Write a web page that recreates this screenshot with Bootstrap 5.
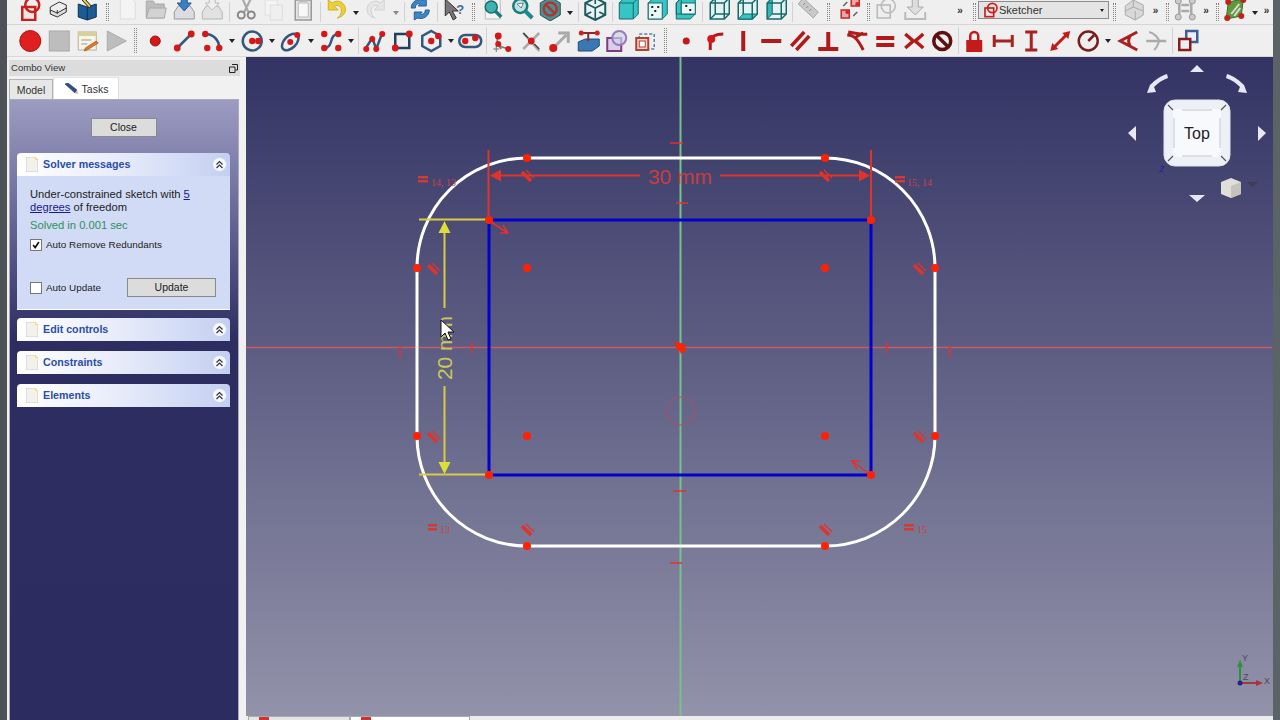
<!DOCTYPE html>
<html lang="en">
<head>
<meta charset="UTF-8">
<title>FreeCAD Sketcher</title>
<link href="https://cdn.jsdelivr.net/npm/bootstrap@5.3.0/dist/css/bootstrap.min.css" rel="stylesheet">
<style>
  html, body { height: 100%; overflow: hidden; }
  body { font-family: "Liberation Sans", Arial, sans-serif; font-size: 11px; color: #222; background: #eee; }
  .edge { width: 7px; background: #4c5256; flex: none; }
  .edge-r { width: 8px; background: #5b6367; }
  .tbar { background: #efefef; overflow: hidden; padding-left: 9px; }
  .tbar-1 { height: 25px; border-bottom: 1px solid #d4d4d4; }
  .tbar-2 { height: 32px; border-bottom: 1px solid #d8d8d8; }
  .ic { width: 28.5px; height: 24px; flex: none; display: block; }
  .tbar-1 .ic { margin-top: -3px; }
  .tbar-2 .ic { margin-top: 4px; }
  .ca { width: 11px; flex: none; display: flex; align-items: center; justify-content: center; }
  .ca::after { content: ""; border: 3px solid transparent; border-top: 4px solid #222; margin-top: 4px; }
  .ca.off::after { border-top-color: #888; }
  .more { width: 20px; flex: none; text-align: center; font-size: 10px; font-weight: 700; line-height: 22px; color: #333; }
  .more.m14 { width: 14px; } .more.m12 { width: 12px; }
  .more.after-gap { margin-left: 21px; }
  .hd { width: 11px; flex: none; position: relative; }
  .hd::after { content: ""; position: absolute; left: 40%; top: 3px; bottom: 3px; width: 3px; border-left: 1px dotted #888; border-right: 1px dotted #888; }
  .hd.n { width: 8px; } .hd.w { width: 13.5px; } .hd.x { width: 12.5px; }
  .sp { width: 5px; flex: none; position: relative; }
  .sp::after { content: ""; position: absolute; left: 50%; top: 2px; bottom: 2px; border-left: 1px solid #d2d2d2; }
  .sp.s { width: 3.5px; }
  .wb { width: 131px; height: 18px; flex: none; margin-top: 1px; padding: 0 4px; background: #e4e4e4; border: 1px solid #8c8c8c; font-size: 11px; color: #333; }
  .wb svg { width: 16px; height: 16px; }
  .wb .arrow { border: 2.5px solid transparent; border-top: 3px solid #222; margin-top: 3px; }

  .combo { width: 239px; background: #f1f1f1; flex: none; }
  .combo-title { height: 16px; margin: 3px 6px 0 2px; padding: 0 2px; background: #dcdcdc; font-size: 9.6px; line-height: 16px; color: #333; }
  .combo .nav-tabs { margin: 1px 0 0 2px; border: 0; height: 22px; font-size: 10.5px; width: 232px; }
  .combo .nav-link { padding: 0; border: 1px solid #b4b4b4; border-bottom: 0; border-radius: 0; color: #333; background: #e7e7e7; height: 20px; margin-top: 2px; line-height: 20px; width: 44px; text-align: center; }
  .combo .nav-link.active { background: #fff; height: 22px; margin-top: 0; width: 66px; color: #333; }
  .taskpanel { margin: 0 7px 0 2px; padding: 18px 8px 0 7px; border: 1px solid #aab; border-bottom: 0;
    background: linear-gradient(180deg, #9c9cc2 0, #6f6f9e 100px, #2d2d61 240px, #2c2c60 100%); }
  .btn-qt { --bs-btn-padding-y: 0; --bs-btn-padding-x: 0; --bs-btn-font-size: 10.5px; --bs-btn-color: #222; --bs-btn-bg: #dcdcdc; --bs-btn-border-color: #8a8a8a;
    --bs-btn-border-radius: 0; --bs-btn-hover-bg: #dcdcdc; --bs-btn-hover-border-color: #8a8a8a; height: 19px; line-height: 17px; }
  .btn-close-task { width: 66px; margin-bottom: 16px; }
  .btn-update { width: 89px; }
  .taskbox { border: 0; border-radius: 4px 4px 0 0; background: none; margin-bottom: 10px; --bs-card-spacer-y: 0; --bs-card-spacer-x: 0; }
  .taskbox .card-header { height: 23px; padding: 0 3px 0 9px; border: 0; border-radius: 4px 4px 0 0; background: linear-gradient(90deg, #fff 0, #e6ebfa 50%, #c3cff1 100%);
    color: #2b4ea6; font-weight: 700; font-size: 10.7px; }
  .taskbox .doc { width: 12px; height: 15px; margin-right: 5px; }
  .taskbox .tog { width: 15px; height: 15px; margin-left: auto; }
  .taskbox .card-body { height: 134px; padding: 12px 13px 0; background: #d1dbf5; line-height: 13px; color: #222; font-size: 11.2px; border-bottom: 1px solid #fff; }
  .taskbox a { color: #1a1a8c; }
  .solved { color: #2f8f5b; margin: 5px 0 6px; font-size: 11.2px; }
  .form-check { min-height: 0; padding: 0; margin: 0; display: flex; align-items: center; font-size: 9.9px; }
  .form-check .form-check-input { float: none; margin: 0 4px 0 0; width: 12px; height: 12px; border-radius: 0; border: 1px solid #777; background-color: #fff; }
  .form-check-input:checked[type=checkbox] { background-color: #fff; border-color: #777;
    --bs-form-check-bg-image: url("data:image/svg+xml,%3csvg xmlns='http://www.w3.org/2000/svg' viewBox='0 0 12 12'%3e%3cpath d='M2.5 6l2.5 3 4.5-6.5' fill='none' stroke='%23111' stroke-width='2'/%3e%3c/svg%3e"); }
  .upd-row { margin-top: 27px; padding-right: 1px; }

  .view-col { min-width: 0; }
  .view { height: 659px; background: linear-gradient(180deg, #333364 0, #9292aa 100%); overflow: hidden; }
  .view svg { display: block; }
  .doc-tabs { height: 4px; overflow: hidden; padding-left: 2px; background: #ececec; }
  .doc-tab { width: 102px; background: #e5e5e5; border: 1px solid #aaa; border-bottom: 0; }
  .doc-tab.on { width: 120px; background: #fff; }
  .doc-tab i { display: block; width: 10px; height: 3px; margin-left: 10px; background: #c33; }
</style>
</head>
<body class="d-flex">
<div class="edge"></div>
<div class="flex-grow-1 d-flex flex-column" id="app">

  <div class="tbar tbar-1 d-flex">
    <svg class="ic" viewBox="0 0 24 24"><rect x="4" y="10" width="13" height="13" fill="#f6e4e4" stroke="#c4211f" stroke-width="2.5"/><circle cx="14" cy="8" r="7" fill="none" stroke="#c4211f" stroke-width="2.5"/></svg>
    <svg class="ic" viewBox="0 0 24 24"><path d="M3 10l9-5 7 3v4l-9 5-7-3z" fill="#eee" stroke="#333"/><path d="M3 13l7 3 9-5v4l-9 5-7-3z" fill="#ddd" stroke="#333"/><path d="M10 13v4" stroke="#333"/></svg>
    <svg class="ic" viewBox="0 0 24 24"><path d="M3 7l9 3 9-3v13l-9 3-9-3z" fill="#1c5c96" stroke="#0f2f50"/><path d="M12 10v13" stroke="#0f2f50"/><path d="M5 1l9 10 2-2L7 -1z" fill="#e3c84a" stroke="#222"/></svg>
    <div class="hd"></div>
    <svg class="ic" viewBox="0 0 24 24"><path d="M5 1h11l4 4v17H5z" fill="#f4f4f4" stroke="#ddd"/></svg>
    <svg class="ic" viewBox="0 0 24 24"><path d="M3 4h7l2 3h9v14H3z" fill="#bdbdbd" stroke="#aaa"/><path d="M3 21l3-10h17l-2 10z" fill="#d2d2d2" stroke="#aaa"/></svg>
    <svg class="ic" viewBox="0 0 24 24"><path d="M2 15l4-6h12l4 6v7H2z" fill="#dcdce2" stroke="#999"/><path d="M9 0h6v6h4l-7 8-7-8h4z" fill="#3a80c0" stroke="#27598a"/></svg>
    <svg class="ic" viewBox="0 0 24 24"><path d="M2 15l4-6h12l4 6v7H2z" fill="#e2e2e2" stroke="#b5b5b5"/><path d="M9 1h6v5h4l-7 7-7-7h4z" fill="#eee" stroke="#bbb"/></svg>
    <div class="sp"></div>
    <svg class="ic" viewBox="0 0 24 24"><path d="M8 1l6 14M17 1l-7 14" stroke="#aaa" stroke-width="2.2" fill="none"/><circle cx="7" cy="18" r="3.5" fill="none" stroke="#888" stroke-width="2"/><circle cx="17" cy="18" r="3.5" fill="none" stroke="#888" stroke-width="2"/></svg>
    <svg class="ic" viewBox="0 0 24 24"><rect x="3" y="3" width="12" height="15" fill="#f4f4f4" stroke="#e0e0e0"/><rect x="8" y="8" width="12" height="15" fill="#efefef" stroke="#ddd"/></svg>
    <svg class="ic" viewBox="0 0 24 24"><rect x="4" y="3" width="16" height="20" fill="#e4e4e4" stroke="#999" stroke-width="1.5"/><rect x="7" y="6" width="10" height="14" fill="#f8f8f8" stroke="#bbb"/><rect x="8" y="1" width="8" height="4" fill="#bbb"/></svg>
    <div class="sp"></div>
    <svg class="ic" viewBox="0 0 24 24"><path d="M4 3v10h10l-4-4c4-2 8 1 7 6-.5 3-2 5-4 6 6-1 9-6 8-10-1-6-8-9-13-5z" fill="#ecd03a" stroke="#d2b11c"/></svg>
    <div class="ca"></div>
    <svg class="ic" viewBox="0 0 24 24"><path d="M20 3v10H10l4-4c-4-2-8 1-7 6 .5 3 2 5 4 6-6-1-9-6-8-10 1-6 8-9 13-5z" fill="#e6e6e6" stroke="#d2d2d2"/></svg>
    <div class="ca off"></div>
    <div class="sp"></div>
    <svg class="ic" viewBox="0 0 24 24"><path d="M3 11c0-6 6-10 12-8l3-2v8h-8l2-2c-3-1-5 1-5 4z" fill="#3a86c8" stroke="#2a5f90"/><path d="M21 13c0 6-6 10-12 8l-3 2v-8h8l-2 2c3 1 5-1 5-4z" fill="#3a86c8" stroke="#2a5f90"/></svg>
    <div class="sp"></div>
    <svg class="ic" viewBox="0 0 24 24"><path d="M3 2v17l4-4 4 8 3-2-4-7h6z" fill="#777" stroke="#333"/><text x="14" y="17" font-family="Liberation Sans" font-weight="700" font-size="13" fill="#3f6c96">?</text></svg>
    <div class="hd"></div>
    <svg class="ic" viewBox="0 0 24 24"><path d="M4 1h15v21H4z" fill="#f4f4f4" stroke="#bbb"/><circle cx="10" cy="10" r="6" fill="#3fb3b3" stroke="#1c6a6a" stroke-width="1.5"/><path d="M14 14l6 6" stroke="#1c7a7a" stroke-width="3.5"/></svg>
    <svg class="ic" viewBox="0 0 24 24"><circle cx="10" cy="9" r="7" fill="#bde3e3" stroke="#1c7a7a" stroke-width="2.5"/><path d="M15 14l7 7" stroke="#1c8a8a" stroke-width="4"/><path d="M7 7l4 4 2-5z" fill="#fff" stroke="#333" stroke-width=".6"/></svg>
    <svg class="ic" viewBox="0 0 24 24"><path d="M12 0l10 6v12l-10 6L2 18V6z" fill="#4d8f8f" stroke="#2b5454"/><circle cx="12" cy="12" r="6.5" fill="none" stroke="#a83838" stroke-width="2.5"/><path d="M7.5 7.5l9 9" stroke="#a83838" stroke-width="2.5"/></svg>
    <div class="ca"></div>
    <div class="sp"></div>
    <svg class="ic" viewBox="0 0 24 24"><path d="M12 1l10 5v12l-10 5L2 18V6z" fill="#e8f3f3" stroke="#1d5a5c" stroke-width="2"/><path d="M2 6l10 5 10-5M12 11v12M12 1v6M2 18l6-3M22 18l-6-3" stroke="#1d5a5c" fill="none" stroke-width="1.6"/></svg>
    <div class="sp"></div>
    <svg class="ic" viewBox="0 0 24 24"><path d="M3 6l5-5h14v16l-5 5H3z" fill="#35c5c5" stroke="#176a6a"/><path d="M3 6h14v16M17 6l5-5" fill="none" stroke="#176a6a"/></svg>
    <svg class="ic" viewBox="0 0 24 24"><path d="M3 6l5-5h14v16l-5 5H3z" fill="#35c5c5" stroke="#176a6a"/><rect x="3" y="6" width="14" height="16" fill="#e8f8f8" stroke="#176a6a"/><g fill="#222"><rect x="6" y="9" width="2" height="2"/><rect x="12" y="9" width="2" height="2"/><rect x="9" y="13" width="2" height="2"/><rect x="6" y="17" width="2" height="2"/></g></svg>
    <svg class="ic" viewBox="0 0 24 24"><path d="M3 6l5-5h14v16l-5 5H3z" fill="#35c5c5" stroke="#176a6a"/><path d="M8 1v16H3V6zM8 17h14" fill="none" stroke="#176a6a"/><rect x="8" y="6" width="14" height="11" fill="#e8f8f8" stroke="#176a6a"/><g fill="#222"><rect x="12" y="8" width="2" height="2"/><rect x="16" y="12" width="2" height="2"/></g></svg>
    <div class="sp"></div>
    <svg class="ic" viewBox="0 0 24 24"><path d="M3 6l5-5h14v16l-5 5H3z" fill="#e4f2f2" stroke="#176a6a" stroke-width="1.5"/><path d="M3 6h14v16M17 6l5-5M8 1v16l-5 5M8 17h14" fill="none" stroke="#176a6a" stroke-width="1.5"/></svg>
    <svg class="ic" viewBox="0 0 24 24"><path d="M3 6l5-5h14v16l-5 5H3z" fill="#e4f2f2" stroke="#176a6a" stroke-width="1.5"/><path d="M8 17h14l-5 5H3z" fill="#35c5c5" stroke="#176a6a"/><path d="M3 6h14v16M17 6l5-5M8 1v16" fill="none" stroke="#176a6a" stroke-width="1.5"/></svg>
    <svg class="ic" viewBox="0 0 24 24"><path d="M3 6l5-5h14v16l-5 5H3z" fill="#e4f2f2" stroke="#176a6a" stroke-width="1.5"/><path d="M3 6l5-5v16l-5 5z" fill="#35b5b5" stroke="#176a6a"/><path d="M3 6h14v16M17 6l5-5M8 17h14" fill="none" stroke="#176a6a" stroke-width="1.5"/></svg>
    <div class="sp s"></div>
    <svg class="ic" viewBox="0 0 24 24"><path d="M7 1L22 15l-5 6L2 7z" fill="#c9c9c9" stroke="#a8a8a8"/><path d="M9 6l-2 2M12 9l-2 2M15 12l-2 2" stroke="#888"/></svg>
    <div class="hd w"></div>
    <svg class="ic" viewBox="0 0 24 24"><rect x="13" y="1" width="8" height="8" fill="#e9a8a8" stroke="#c0302e" stroke-width="1.6"/><rect x="3" y="13" width="8" height="8" fill="#e9a8a8" stroke="#c0302e" stroke-width="1.6"/><path d="M5 9l4-4M15 19l4-4" stroke="#666" stroke-width="1.6"/><circle cx="19" cy="7" r="2" fill="#d22"/><circle cx="9" cy="15" r="2" fill="#d22"/></svg>
    <div class="hd n"></div>
    <svg class="ic" viewBox="0 0 24 24"><rect x="3" y="8" width="13" height="13" fill="#eee" stroke="#bbb" stroke-width="1.6"/><circle cx="14" cy="9" r="7" fill="none" stroke="#bbb" stroke-width="1.6"/></svg>
    <svg class="ic" viewBox="0 0 24 24"><path d="M9 1h6v9h5l-8 8-8-8h5z" fill="#ddd" stroke="#aaa"/><path d="M2 15v7h20v-7" fill="none" stroke="#bbb" stroke-width="2"/></svg>
    <div class="more after-gap">»</div>
    <div class="hd n"></div>
    <div class="wb d-flex align-items-center">
      <svg viewBox="0 0 24 24"><rect x="3" y="9" width="13" height="13" fill="#f6e4e4" stroke="#c4211f" stroke-width="2.5"/><circle cx="14" cy="9" r="7" fill="none" stroke="#c4211f" stroke-width="2.5"/></svg>
      <span class="flex-grow-1">Sketcher</span><span class="arrow"></span>
    </div>
    <div class="hd"></div>
    <svg class="ic" viewBox="0 0 24 24"><path d="M3 9l8-6 10 5v10l-8 5-10-5z" fill="#d8d8d8" stroke="#aaa"/><path d="M11 3v7l-8 4M11 10l10 4M13 23V14" fill="none" stroke="#aaa"/></svg>
    <div class="more m14">»</div>
    <div class="hd n"></div>
    <svg class="ic" viewBox="0 0 24 24"><g fill="#ccc" stroke="#999"><circle cx="5" cy="4" r="3"/><circle cx="19" cy="4" r="3"/><circle cx="5" cy="20" r="3"/><circle cx="19" cy="20" r="3"/></g><path d="M6 7v10M18 7v10M8 8l8 0M8 14h8" stroke="#aaa" stroke-width="2.5" fill="none"/></svg>
    <div class="more m14">»</div>
    <div class="hd n"></div>
    <svg class="ic" viewBox="0 0 24 24"><path d="M5 5l15-3-2 17-15 3z" fill="#5e9a3c" stroke="#3d6d26"/><path d="M8 17L16 7M11 19l6-8" stroke="#ddd" stroke-width="2"/><g fill="#c0231f"><circle cx="5" cy="5" r="3"/><circle cx="20" cy="3" r="3"/><circle cx="18" cy="19" r="3"/><circle cx="4" cy="21" r="3"/></g></svg>
    <div class="ca"></div>
    <div class="more m12">»</div>
  </div>

  <div class="tbar tbar-2 d-flex">
    <svg class="ic" viewBox="0 0 24 24"><circle cx="12" cy="12" r="10.5" fill="#e0201e" stroke="#a81412"/></svg>
    <svg class="ic" viewBox="0 0 24 24"><rect x="2" y="2" width="20" height="20" fill="#bdbdbd" stroke="#aaa"/></svg>
    <svg class="ic" viewBox="0 0 24 24"><rect x="3" y="3" width="18" height="18" fill="#f8f5e6" stroke="#b5b09a"/><rect x="3" y="3" width="18" height="4" fill="#d8cf9a"/><path d="M6 11h10M6 15h6" stroke="#999"/><path d="M10 19l11-7 2 2-11 7-3 1z" fill="#e07a2a" stroke="#8a4a1a" stroke-width=".6"/></svg>
    <svg class="ic" viewBox="0 0 24 24"><path d="M3 2l19 10L3 22z" fill="#bdbdbd" stroke="#aaa"/></svg>
    <div class="hd"></div>
    <svg class="ic" viewBox="0 0 24 24"><circle cx="12" cy="12" r="5" fill="#d4181a" stroke="#9a1212"/></svg>
    <svg class="ic" viewBox="0 0 24 24"><path d="M5 19L19 5" stroke="#34587c" stroke-width="2.5"/><circle cx="19" cy="5" r="3.4" fill="#d4181a"/><circle cx="5" cy="19" r="3.4" fill="#d4181a"/></svg>
    <svg class="ic" viewBox="0 0 24 24"><path d="M5 5c8 0 14 6 14 14" fill="none" stroke="#34587c" stroke-width="2.5"/><circle cx="5" cy="5" r="3.2" fill="#d4181a"/><circle cx="19" cy="19" r="3.2" fill="#d4181a"/><circle cx="7" cy="19" r="3.2" fill="#d4181a"/></svg>
    <div class="ca"></div>
    <svg class="ic" viewBox="0 0 24 24"><circle cx="12" cy="12" r="9.5" fill="none" stroke="#34587c" stroke-width="2.5"/><circle cx="12" cy="12" r="3.2" fill="#d4181a"/><circle cx="18" cy="12" r="3.2" fill="#d4181a"/></svg>
    <div class="ca"></div>
    <svg class="ic" viewBox="0 0 24 24"><ellipse cx="11" cy="13" rx="10" ry="6" transform="rotate(-45 11 13)" fill="none" stroke="#34587c" stroke-width="2.5"/><circle cx="11" cy="13" r="3" fill="#d4181a"/><circle cx="18" cy="6" r="3" fill="#d4181a"/></svg>
    <div class="ca"></div>
    <svg class="ic" viewBox="0 0 24 24"><path d="M5 19c10 0 4-14 14-14" fill="none" stroke="#34587c" stroke-width="2.5"/><g fill="#d4181a"><circle cx="5" cy="5" r="3.2"/><circle cx="19" cy="5" r="3.2"/><circle cx="5" cy="19" r="3.2"/><circle cx="19" cy="19" r="3.2"/></g></svg>
    <div class="ca"></div>
    <div class="sp s"></div>
    <svg class="ic" viewBox="0 0 24 24"><path d="M3 20L10 9l4 11L20 4" fill="none" stroke="#34587c" stroke-width="2.5"/><g fill="#d4181a"><circle cx="4" cy="20" r="3"/><circle cx="10" cy="10" r="3"/><circle cx="14" cy="20" r="3"/><circle cx="20" cy="5" r="3"/></g></svg>
    <svg class="ic" viewBox="0 0 24 24"><rect x="5" y="5" width="14" height="14" fill="none" stroke="#22405e" stroke-width="2.5"/><circle cx="19" cy="5" r="3.4" fill="#d4181a"/><circle cx="5" cy="19" r="3.4" fill="#d4181a"/></svg>
    <svg class="ic" viewBox="0 0 24 24"><path d="M12 2l9 5v10l-9 5-9-5V7z" fill="none" stroke="#34587c" stroke-width="2.5"/><circle cx="12" cy="12" r="3.2" fill="#d4181a"/><circle cx="19" cy="7" r="3.2" fill="#d4181a"/></svg>
    <div class="ca"></div>
    <svg class="ic" viewBox="0 0 24 24"><rect x="1" y="6" width="22" height="12" rx="6" fill="none" stroke="#34587c" stroke-width="2.5"/><circle cx="7" cy="12" r="3.2" fill="#d4181a"/><circle cx="17" cy="9" r="3.2" fill="#d4181a"/></svg>
    <div class="sp s"></div>
    <svg class="ic" viewBox="0 0 24 24"><path d="M7 7v8l4 5M9 17l9 3" fill="none" stroke="#777" stroke-width="1.5"/><path d="M3 20h6M6 17v6" stroke="#777"/><circle cx="8" cy="7" r="3.4" fill="#d4181a"/><circle cx="8" cy="15" r="3" fill="#d4181a"/><circle cx="18" cy="20" r="3" fill="#d4181a"/></svg>
    <svg class="ic" viewBox="0 0 24 24"><path d="M4 4l16 18M20 4L4 20" stroke="#aaa" stroke-width="2.5"/><path d="M4 4l5 5M20 20l-5-5" stroke="#444" stroke-width="1.5"/><circle cx="12" cy="12" r="3.4" fill="#d4181a"/></svg>
    <svg class="ic" viewBox="0 0 24 24"><path d="M6 19L19 6M11 4h10v10" fill="none" stroke="#aaa" stroke-width="3"/><circle cx="6" cy="19" r="4" fill="#d4181a"/></svg>
    <svg class="ic" viewBox="0 0 24 24"><path d="M2 13l7-3h14v7l-7 5H2z" fill="#3a78b5" stroke="#234d75"/><path d="M5 4h16M12 4v8" stroke="#8a2a2a" stroke-width="2"/><circle cx="5" cy="4" r="2.5" fill="#c22"/><circle cx="21" cy="4" r="2.5" fill="#c22"/></svg>
    <svg class="ic" viewBox="0 0 24 24"><rect x="3" y="9" width="14" height="13" fill="#d8cfe8" stroke="#7a3e7e" stroke-width="2"/><circle cx="15" cy="9" r="7" fill="#cfd4ec" fill-opacity=".7" stroke="#9a7ab8" stroke-width="2"/></svg>
    <svg class="ic" viewBox="0 0 24 24"><rect x="6" y="5" width="15" height="15" fill="none" stroke="#5a7fa8" stroke-dasharray="3 2" stroke-width="1.5"/><rect x="3" y="9" width="12" height="12" fill="#f3d8d4" stroke="#b04030" stroke-width="2"/><rect x="6" y="12" width="6" height="6" fill="#fff" stroke="#b04030"/></svg>
    <div class="hd x"></div>
    <svg class="ic" viewBox="0 0 24 24"><circle cx="12" cy="12" r="3.500" fill="#c4181a"/></svg>
    <svg class="ic" viewBox="0 0 24 24"><path d="M8 21V12c0-4 5-7 13-7" fill="none" stroke="#b01a1a" stroke-width="3"/><circle cx="9" cy="10" r="4" fill="#d4181a"/></svg>
    <svg class="ic" viewBox="0 0 24 24"><rect x="10" y="2" width="4" height="20" fill="#b01a1a"/></svg>
    <svg class="ic" viewBox="0 0 24 24"><rect x="2" y="10" width="20" height="4" fill="#b01a1a"/></svg>
    <svg class="ic" viewBox="0 0 24 24"><path d="M3 17L16 3M8 21L21 7" stroke="#b01a1a" stroke-width="3.5"/></svg>
    <svg class="ic" viewBox="0 0 24 24"><path d="M12 3v17M2 20h20" stroke="#b01a1a" stroke-width="4"/></svg>
    <svg class="ic" viewBox="0 0 24 24"><path d="M2 6c7 0 11 5 16 15M3 3c8 1 13 3 19 2M9 9L18 4" fill="none" stroke="#b01a1a" stroke-width="3"/></svg>
    <svg class="ic" viewBox="0 0 24 24"><path d="M3 7h18v4H3zM3 14h18v4H3z" fill="#b01a1a"/></svg>
    <svg class="ic" viewBox="0 0 24 24"><path d="M3 5l8 7-8 7M21 5l-8 7 8 7" fill="none" stroke="#b01a1a" stroke-width="3.500"/></svg>
    <svg class="ic" viewBox="0 0 24 24"><circle cx="12" cy="12" r="8.5" fill="#eee" stroke="#5c1010" stroke-width="3.5"/><path d="M6 6l12 12" stroke="#5c1010" stroke-width="3.5"/></svg>
    <div class="sp s"></div>
    <svg class="ic" viewBox="0 0 24 24"><rect x="4" y="11" width="16" height="12" fill="#c41a1a"/><path d="M8 11V7a4 4 0 018 0v4" fill="none" stroke="#c41a1a" stroke-width="2.5"/></svg>
    <svg class="ic" viewBox="0 0 24 24"><path d="M3 6v12M21 6v12M3 12h18" stroke="#a82222" stroke-width="3" fill="none"/></svg>
    <svg class="ic" viewBox="0 0 24 24"><path d="M6 3h12M6 21h12M12 3v18" stroke="#a82222" stroke-width="3" fill="none"/></svg>
    <svg class="ic" viewBox="0 0 24 24"><path d="M5 19L19 5" stroke="#c41a1a" stroke-width="3"/><path d="M22 2l-8 2 6 6zM2 22l8-2-6-6z" fill="#c41a1a"/></svg>
    <svg class="ic" viewBox="0 0 24 24"><circle cx="12" cy="12" r="9.5" fill="none" stroke="#7c1c1c" stroke-width="2.5"/><path d="M12 12l6-6" stroke="#7c1c1c" stroke-width="2.5"/></svg>
    <div class="ca"></div>
    <svg class="ic" viewBox="0 0 24 24"><path d="M21 3L4 12l17 9M14 7c-2 3-2 7 0 10" fill="none" stroke="#a82222" stroke-width="3"/></svg>
    <svg class="ic" viewBox="0 0 24 24"><path d="M2 12h20" stroke="#aaa" stroke-width="2.5"/><path d="M5 3c5 1 9 6 10 9-1 3-3 7-5 9" fill="none" stroke="#aaa" stroke-width="2"/></svg>
    <div class="sp s"></div>
    <svg class="ic" viewBox="0 0 24 24"><rect x="10" y="2" width="11" height="11" fill="#eef" stroke="#3f5f92" stroke-width="2.5"/><rect x="3" y="10" width="11" height="11" fill="#eee" stroke="#8a1c1c" stroke-width="2.5"/></svg>
  </div>

  <div class="d-flex flex-grow-1 overflow-hidden">
    <div class="combo">
      <div class="combo-title d-flex justify-content-between align-items-center">
        <span>Combo View</span>
        <svg width="9" height="9" viewBox="0 0 9 9"><path d="M3 .5h5.5V6H6.5M.5 3H6v5.500H.5z" fill="none" stroke="#222"/></svg>
      </div>
      <ul class="nav nav-tabs flex-nowrap">
        <li class="nav-item"><a class="nav-link" href="#">Model</a></li>
        <li class="nav-item"><a class="nav-link active d-flex align-items-center justify-content-center gap-1" href="#">
          <svg width="14" height="12" viewBox="0 0 14 12"><path d="M1 1l3-1 9 7-2 3z" fill="#2f4f86" stroke="#1e3560" stroke-width=".6"/><path d="M11 10l2-3 1 4z" fill="#caa"/></svg>Tasks</a></li>
      </ul>
      <div class="taskpanel h-100">
        <div class="text-center"><button class="btn btn-qt btn-close-task">Close</button></div>

        <div class="card taskbox mb-2">
          <div class="card-header d-flex align-items-center">
            <svg class="doc" viewBox="0 0 12 15"><path d="M0 0h9l3 3v12H0z" fill="#f2f2ea" stroke="#ccc"/><path d="M9 0l3 3H9z" fill="#ffe94a"/></svg>
            Solver messages
            <svg class="tog" viewBox="0 0 15 15"><circle cx="7.500" cy="7.500" r="7" fill="#f6f8fe" stroke="#c9d2ee"/><path d="M4.500 7.500l3-3 3 3M4.500 11l3-3 3 3" fill="none" stroke="#334" stroke-width="1.200"/></svg>
          </div>
          <div class="card-body">
            <div>Under-constrained sketch with <a href="#">5</a><br><a href="#">degrees</a> of freedom</div>
            <div class="solved">Solved in 0.001 sec</div>
            <div class="form-check"><input class="form-check-input" type="checkbox" checked id="chk-redundant"><label for="chk-redundant">Auto Remove Redundants</label></div>
            <div class="upd-row d-flex align-items-center justify-content-between">
              <div class="form-check"><input class="form-check-input" type="checkbox" id="chk-update"><label for="chk-update">Auto Update</label></div>
              <button class="btn btn-qt btn-update">Update</button>
            </div>
          </div>
        </div>

        <div class="card taskbox">
          <div class="card-header d-flex align-items-center">
            <svg class="doc" viewBox="0 0 12 15"><path d="M0 0h9l3 3v12H0z" fill="#f2f2ea" stroke="#ccc"/><path d="M9 0l3 3H9z" fill="#ffe94a"/></svg>
            Edit controls
            <svg class="tog" viewBox="0 0 15 15"><circle cx="7.500" cy="7.500" r="7" fill="#f6f8fe" stroke="#c9d2ee"/><path d="M4.500 7.500l3-3 3 3M4.500 11l3-3 3 3" fill="none" stroke="#334" stroke-width="1.200"/></svg>
          </div>
        </div>
        <div class="card taskbox">
          <div class="card-header d-flex align-items-center">
            <svg class="doc" viewBox="0 0 12 15"><path d="M0 0h9l3 3v12H0z" fill="#f2f2ea" stroke="#ccc"/><path d="M9 0l3 3H9z" fill="#ffe94a"/></svg>
            Constraints
            <svg class="tog" viewBox="0 0 15 15"><circle cx="7.500" cy="7.500" r="7" fill="#f6f8fe" stroke="#c9d2ee"/><path d="M4.500 7.500l3-3 3 3M4.500 11l3-3 3 3" fill="none" stroke="#334" stroke-width="1.200"/></svg>
          </div>
        </div>
        <div class="card taskbox">
          <div class="card-header d-flex align-items-center">
            <svg class="doc" viewBox="0 0 12 15"><path d="M0 0h9l3 3v12H0z" fill="#f2f2ea" stroke="#ccc"/><path d="M9 0l3 3H9z" fill="#ffe94a"/></svg>
            Elements
            <svg class="tog" viewBox="0 0 15 15"><circle cx="7.500" cy="7.500" r="7" fill="#f6f8fe" stroke="#c9d2ee"/><path d="M4.500 7.500l3-3 3 3M4.500 11l3-3 3 3" fill="none" stroke="#334" stroke-width="1.200"/></svg>
          </div>
        </div>
      </div>
    </div>

    <div class="view-col flex-grow-1 d-flex flex-column">
      <div class="view">
        <!-- sketch canvas, coordinates are page pixels -->
        <svg width="1026" height="659" viewBox="246 57 1026 659" font-family="Liberation Sans, sans-serif">
          <defs>
            <g id="tan"><path d="M-5-4L4 5" stroke-width="3.500"/><path d="M-1-6L7 2" stroke-width="1.200"/></g>
          </defs>
          <path d="M246 347.500H1272" stroke="#c75a62" stroke-width="1.500"/>
          <path d="M680.500 57V716" stroke="#73c48a" stroke-width="2"/>
          <circle cx="681" cy="411" r="14" fill="none" stroke="#a3506f" stroke-width="1.200"/>

          <path d="M527 158H825A110 110 0 0 1 935 268V436A110 110 0 0 1 825 546H527A110 110 0 0 1 417 436V268A110 110 0 0 1 527 158Z" fill="none" stroke="#fff" stroke-width="3"/>
          <rect x="489" y="220" width="382" height="255" fill="none" stroke="#0202cc" stroke-width="3"/>

          <!-- 20 mm dimension -->
          <g stroke="#d9cb45" stroke-width="2" fill="none">
            <path d="M419 219.500H489M419 474.500H489"/>
            <path d="M444.500 232V308M444.500 386V462"/>
          </g>
          <path d="M444.500 221l-6 12h12zM444.500 474l-6-12h12z" fill="#dede3a"/>
          <text transform="translate(452 348) rotate(-90)" text-anchor="middle" font-size="21" fill="#c9c957">20 mm</text>

          <!-- 30 mm dimension -->
          <g stroke="#e0332a" stroke-width="2" fill="none">
            <path d="M488.500 150V220M871 150V220"/>
            <path d="M500 175.500H640M720 175.500H860"/>
          </g>
          <path d="M490 175.500l11-6v12zM870 175.500l-11-6v12z" fill="#e0332a"/>
          <text x="680" y="184" text-anchor="middle" font-size="21" fill="#c53d3f">30 mm</text>

          <!-- constraint marks -->
          <g stroke="#e0332a" fill="none">
            <use href="#tan" x="527" y="176"/>
            <use href="#tan" x="825" y="176"/>
            <use href="#tan" x="433" y="269"/>
            <use href="#tan" x="919" y="269"/>
            <use href="#tan" x="433" y="437"/>
            <use href="#tan" x="919" y="437"/>
            <use href="#tan" x="527" y="530"/>
            <use href="#tan" x="825" y="530"/>
            <path d="M670 143H683M676 203H688M673 491H686M670 563H682" stroke-width="1.500"/>
            <path d="M472 342V353M400 346V358M887 342V353M950 346V358" stroke-width="1.500"/>
            <path d="M491 222L508 233M500 233L508 233L503 225" stroke-width="1.500"/>
            <path d="M868 473L852 461M860 461L852 461L857 469" stroke-width="1.500"/>
          </g>
          <g fill="#d13a36">
            <rect x="418" y="176" width="10" height="2.500"/><rect x="418" y="180" width="10" height="2.500"/>
            <rect x="895" y="176" width="10" height="2.500"/><rect x="895" y="180" width="10" height="2.500"/>
            <rect x="428" y="524" width="9" height="2.500"/><rect x="428" y="528" width="9" height="2.500"/>
            <rect x="904" y="524" width="10" height="2.500"/><rect x="904" y="528" width="10" height="2.500"/>
          </g>
          <g fill="#c94340" font-size="10" font-family="Liberation Serif, serif">
            <text x="431" y="186">14, 13</text>
            <text x="907" y="186">15, 14</text>
            <text x="440" y="533">13</text>
            <text x="917" y="533">15</text>
          </g>

          <g fill="#ff2200">
            <circle cx="527" cy="158" r="4"/><circle cx="825" cy="158" r="4"/>
            <circle cx="417" cy="268" r="4"/><circle cx="935" cy="268" r="4"/>
            <circle cx="417" cy="436" r="4"/><circle cx="935" cy="436" r="4"/>
            <circle cx="527" cy="546" r="4"/><circle cx="825" cy="546" r="4"/>
            <circle cx="527" cy="268" r="4"/><circle cx="825" cy="268" r="4"/>
            <circle cx="527" cy="436" r="4"/><circle cx="825" cy="436" r="4"/>
            <circle cx="489" cy="220" r="4"/><circle cx="871" cy="220" r="4"/>
            <circle cx="489" cy="475" r="4"/><circle cx="871" cy="475" r="4"/>
            <circle cx="680" cy="347" r="4"/><path d="M673 341l8 3 4 1 1 5-5 4-2-5z"/>
          </g>

          <!-- cursor -->
          <path d="M441 320V337L445 333L448 340L451 339L448 332H454Z" fill="#fff" stroke="#111"/>

          <!-- navigation cube -->
          <rect x="1164" y="100" width="66" height="66" rx="11" fill="#eef0f8" stroke="#dfe2ee"/>
          <rect x="1173" y="109" width="48" height="48" rx="3" fill="#f8f9fd"/>
          <path d="M1182 110h30M1182 156h30M1174 118v30M1220 118v30" stroke="#c4c6d0"/>
          <path d="M1168 105l5 5M1226 105l-5 5M1168 161l5-5M1226 161l-5-5" stroke="#555" stroke-width="1.200"/>
          <text x="1197" y="139" text-anchor="middle" font-size="16" fill="#222">Top</text>
          <text x="1159" y="172" font-size="11" font-style="italic" fill="#2222aa">z</text>
          <g fill="#e6e8f6">
            <path d="M1197 65l7 7h-14zM1197 202l-8-7h16zM1128 133l8-7v15zM1266 133l-8-7v15z"/>
            <path d="M1147 93l3-8c6-6 11-9 17-11l1 4c-6 2-10 5-14 9l2 5z"/>
            <path d="M1247 93l-3-8c-6-6-11-9-17-11l-1 4c6 2 10 5 14 9l-2 5z"/>
          </g>
          <path d="M1221 182l10-4 10 4v12l-10 4-10-4z" fill="#dfdfd8"/><path d="M1231 186l10-4v12l-10 4z" fill="#c4c4bc"/>
          <path d="M1247 182h11l-5.500 5z" fill="#3d3d5c"/>

          <!-- axis cross -->
          <path d="M1240 683V665" stroke="#2f8f3a" stroke-width="2"/><path d="M1240 660l-3 7h6z" fill="#2f8f3a"/>
          <path d="M1240 683H1258" stroke="#a8343c" stroke-width="2"/><path d="M1263 683l-7-3v6z" fill="#a8343c"/>
          <circle cx="1240" cy="683" r="2.500" fill="#22228a"/>
          <g font-size="9" fill="#4a4a5a"><text x="1242" y="661">Y</text><text x="1243" y="680">Z</text><text x="1264" y="684">X</text></g>
        </svg>
      </div>
      <div class="doc-tabs d-flex">
        <div class="doc-tab"><i></i></div>
        <div class="doc-tab on"><i></i></div>
      </div>
    </div>
  </div>
</div>
<div class="edge edge-r"></div>
<script src="https://cdn.jsdelivr.net/npm/bootstrap@5.3.0/dist/js/bootstrap.bundle.min.js"></script>
</body>
</html>
